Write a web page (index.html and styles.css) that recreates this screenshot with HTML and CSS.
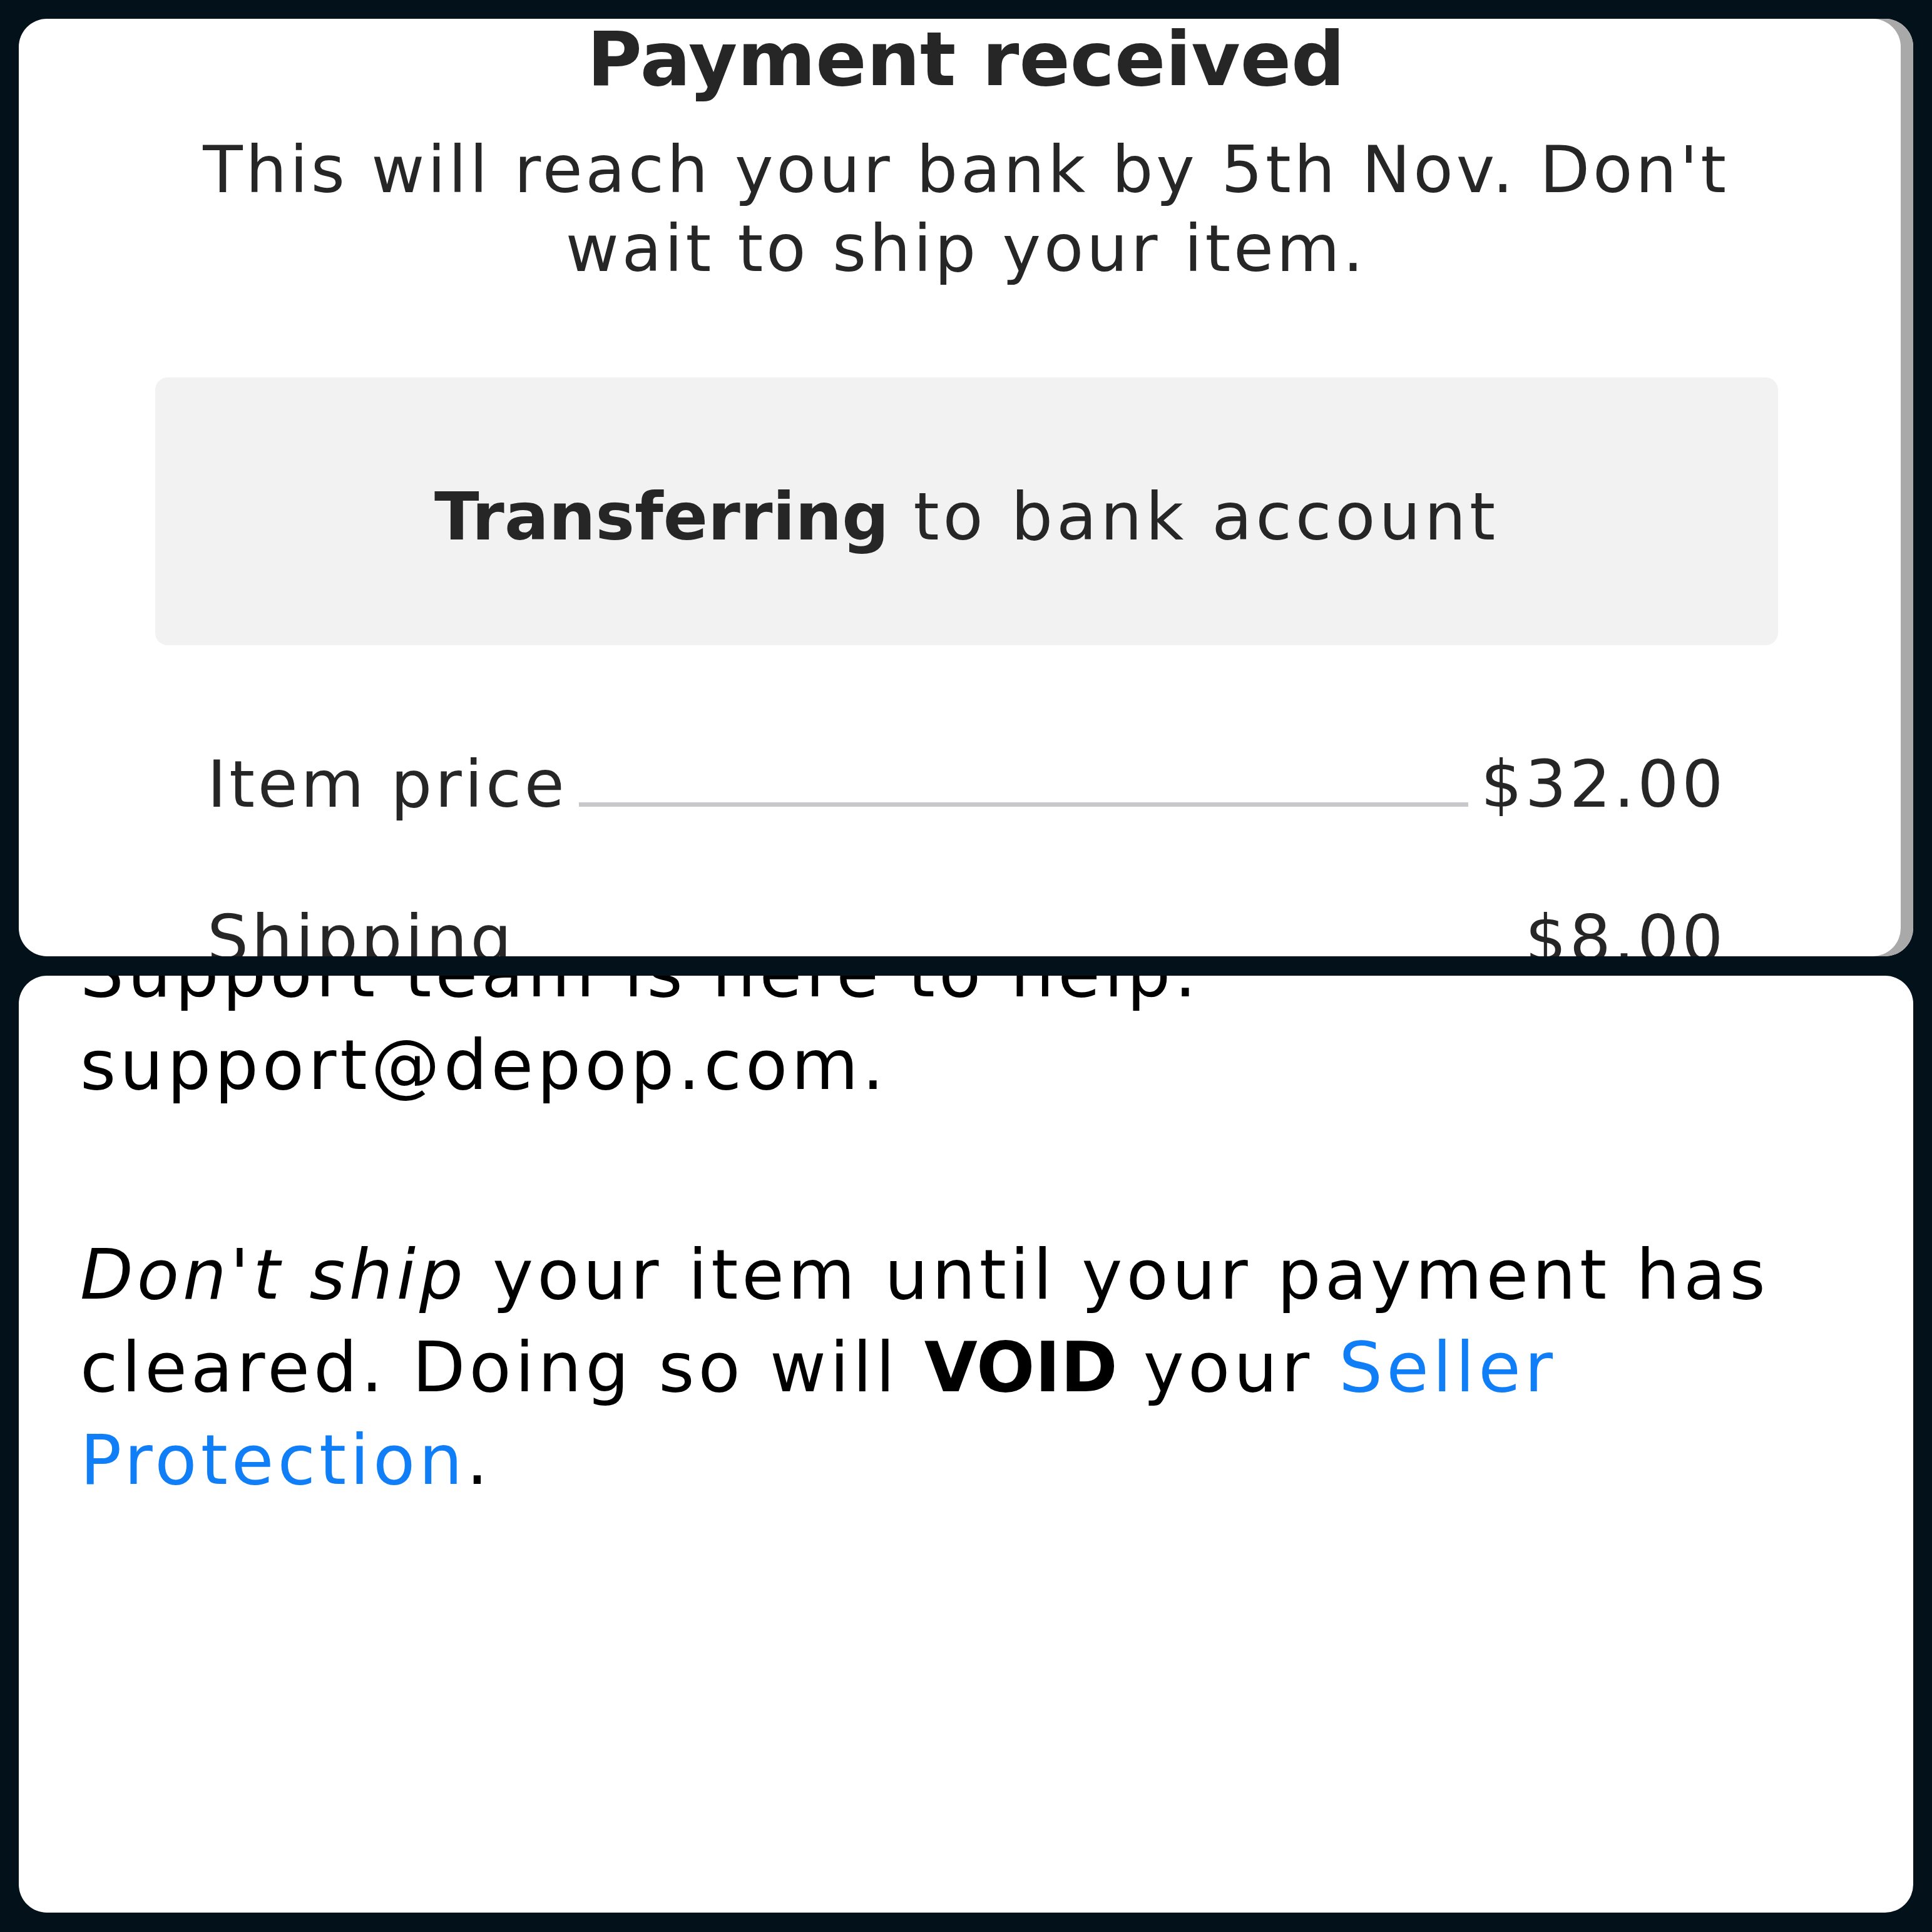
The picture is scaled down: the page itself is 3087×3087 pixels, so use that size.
FILE: index.html
```html
<!DOCTYPE html>
<html lang="en">
<head>
<meta charset="utf-8">
<title>Payment received</title>
<link rel="stylesheet" href="styles.css">
</head>
<body>
<div class="page">
  <section class="card card-top">
    <h1 class="title">Payment received</h1>
    <p class="subtitle">This will reach your bank by 5th Nov. Don't wait to ship your item.</p>
    <div class="status"><b>Transferring</b> to bank account</div>
    <div class="rows">
      <div class="row"><span class="label">Item price</span><span class="leader"></span><span class="amount">$32.00</span></div>
      <div class="row"><span class="label">Shipping</span><span class="leader"></span><span class="amount">$8.00</span></div>
    </div>
  </section>
  <section class="card card-bottom">
    <div class="scroll">
      <p>Support team is here to help.<br>support@depop.com.</p>
      <p><em>Don't ship</em> your item until your payment has cleared. Doing so will <b>VOID</b> your <a class="link" href="#">Seller Protection</a>.</p>
    </div>
  </section>
</div>
</body>
</html>
```
FILE: styles.css
```css
html, body {
  margin: 0;
  background: #02111a;
}
body {
  font-family: "DejaVu Sans", "Liberation Sans", sans-serif;
}
.page {
  display: flex;
  flex-direction: column;
  gap: 31px;
  padding: 30px 30px 31px 30px;
}
.card {
  background: #ffffff;
  border-radius: 45px;
  overflow: hidden;
}
.card-top {
  height: 1498px;
  box-shadow: inset -20px 0 0 #a9a9a9;
  color: #262626;
  text-align: center;
}
.title {
  margin: 0;
  font-size: 120px;
  font-weight: bold;
  line-height: 130px;
}
.subtitle {
  margin: 48px auto 0;
  max-width: 2600px;
  font-size: 104px;
  line-height: 126px;
  letter-spacing: 0.045em;
}
.status {
  margin: 143px 216px 0 218px;
  background: #f2f2f2;
  border-radius: 20px;
  padding: 160px 0 142px;
  font-size: 105px;
  line-height: 126px;
  letter-spacing: 0.055em;
}
.status b {
  letter-spacing: 0;
}
.rows {
  margin: 159px 216px 0 218px;
  padding: 0 83px 0 83px;
  display: flex;
  flex-direction: column;
  gap: 121px;
  text-align: left;
}
.row {
  display: flex;
  align-items: baseline;
  font-size: 104px;
  line-height: 126px;
  letter-spacing: 0.045em;
}
.leader {
  flex: 1;
  height: 7px;
  background: #c7c7cc;
  margin: 0 20px 0 19px;
}
.card-bottom {
  height: 1497px;
  color: #000000;
}
.scroll {
  margin-top: -79px;
  padding: 0 160px 0 98px;
  font-size: 110px;
  line-height: 148px;
  letter-spacing: 0.055em;
}
.scroll p {
  margin: 0;
}
.scroll p + p {
  margin-top: 187px;
}
.scroll b {
  letter-spacing: 0;
}
.link {
  color: #0f7ef7;
  text-decoration: none;
}
```
